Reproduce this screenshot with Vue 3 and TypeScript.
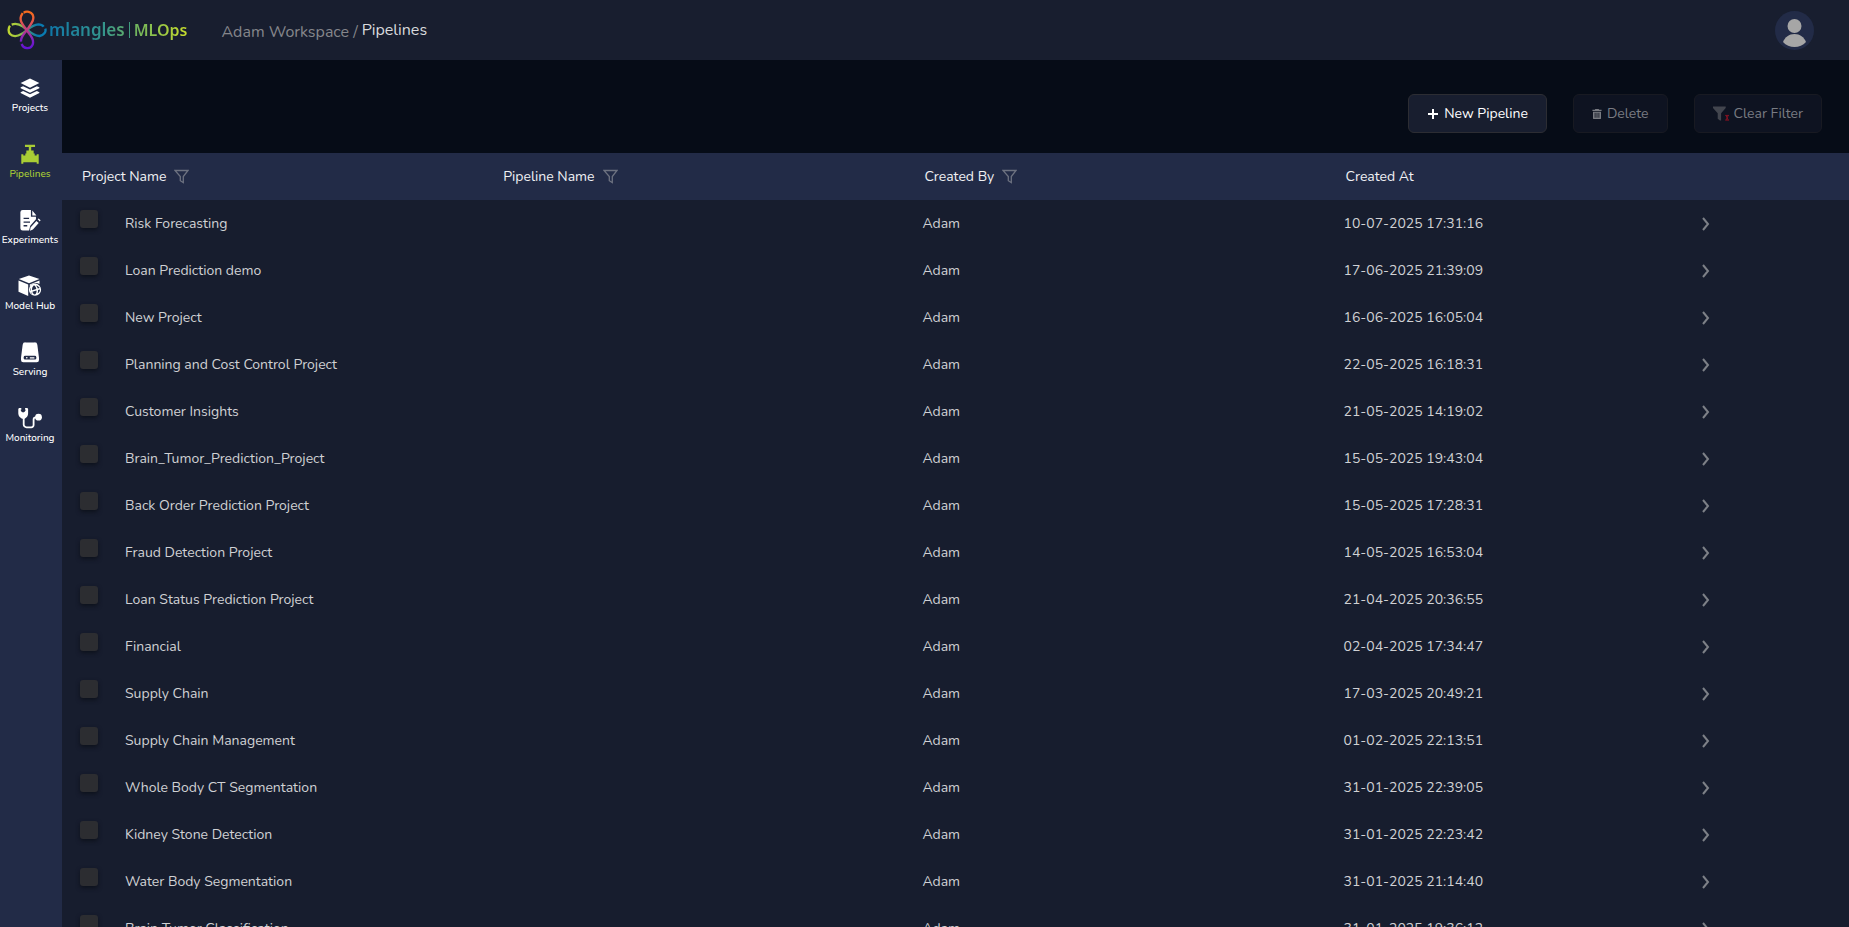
<script setup lang="ts">
import { ref } from 'vue'

interface NavItem {
  id: string
  label: string
}

interface PipelineRow {
  project: string
  pipeline: string
  createdBy: string
  createdAt: string
}

const navItems: NavItem[] = [
  { id: 'projects', label: 'Projects' },
  { id: 'pipelines', label: 'Pipelines' },
  { id: 'experiments', label: 'Experiments' },
  { id: 'hub', label: 'Model Hub' },
  { id: 'serving', label: 'Serving' },
  { id: 'monitoring', label: 'Monitoring' },
]
const activeNav = ref('pipelines')

const columns = [
  { label: 'Project Name', filter: true },
  { label: 'Pipeline Name', filter: true },
  { label: 'Created By', filter: true },
  { label: 'Created At', filter: false },
]

const entries: [string, string][] = [
  ['Risk Forecasting', '10-07-2025 17:31:16'],
  ['Loan Prediction demo', '17-06-2025 21:39:09'],
  ['New Project', '16-06-2025 16:05:04'],
  ['Planning and Cost Control Project', '22-05-2025 16:18:31'],
  ['Customer Insights', '21-05-2025 14:19:02'],
  ['Brain_Tumor_Prediction_Project', '15-05-2025 19:43:04'],
  ['Back Order Prediction Project', '15-05-2025 17:28:31'],
  ['Fraud Detection Project', '14-05-2025 16:53:04'],
  ['Loan Status Prediction Project', '21-04-2025 20:36:55'],
  ['Financial', '02-04-2025 17:34:47'],
  ['Supply Chain', '17-03-2025 20:49:21'],
  ['Supply Chain Management', '01-02-2025 22:13:51'],
  ['Whole Body CT Segmentation', '31-01-2025 22:39:05'],
  ['Kidney Stone Detection', '31-01-2025 22:23:42'],
  ['Water Body Segmentation', '31-01-2025 21:14:40'],
  ['Brain Tumor Classification', '31-01-2025 19:36:12'],
]

const rows: PipelineRow[] = entries.map(([project, createdAt]) => ({
  project,
  pipeline: '',
  createdBy: 'Adam',
  createdAt,
}))

const selected = ref<string[]>([])
</script>

<template>
  <div class="app">
    <header class="topbar">
      <a class="brand" href="#" aria-label="mlangles MLOps">
        <svg class="flower" viewBox="0 0 120 120" aria-hidden="true">
          <defs>
            <linearGradient id="petal-v" x1="0" y1="0" x2="0" y2="120" gradientUnits="userSpaceOnUse">
              <stop offset="0.08" stop-color="#f56a1e" />
              <stop offset="0.3" stop-color="#e2564c" />
              <stop offset="0.52" stop-color="#b8388c" />
              <stop offset="0.75" stop-color="#7d1fc4" />
              <stop offset="1" stop-color="#5d12d8" />
            </linearGradient>
            <linearGradient id="petal-h" x1="0" y1="0" x2="120" y2="0" gradientUnits="userSpaceOnUse">
              <stop offset="0" stop-color="#c3d82e" />
              <stop offset="0.3" stop-color="#9cc545" />
              <stop offset="0.55" stop-color="#3a9080" />
              <stop offset="0.75" stop-color="#0878ac" />
              <stop offset="1" stop-color="#0a7db4" />
            </linearGradient>
          </defs>
          <g fill="none" stroke-width="7">
            <path stroke="url(#petal-h)" d="M9 47C4 53 3 65 9 72C17 81 32 79 42 73C62 62 72 44 94 43C102 43 107 46 110 50M115 56C118 66 110 76 98 78C78 79 66 61 48 50C38 43 24 40 14 44" />
            <path stroke="url(#petal-v)" d="M50 8C59 2 72 5 77 14C84 28 72 42 61 58C50 74 40 82 42 95M44 102C50 118 70 118 76 106C83 92 73 78 60 62C48 45 37 33 42 19L47 9" />
          </g>
        </svg>
        <span class="wordmark"><span class="name">mlangles</span><i class="bar"></i><span>MLOps</span></span>
      </a>
      <nav class="crumbs" aria-label="Breadcrumb">
        <a href="#">Adam Workspace</a>
        <span>/</span>
        <strong>Pipelines</strong>
      </nav>
      <button class="avatar" type="button" aria-label="Account">
        <svg viewBox="0 0 39 39" aria-hidden="true">
          <circle cx="19.500" cy="15" r="7" />
          <path d="M8 31c2-5 6-8 11.500-8S29 26 31 31c-3 3.500-7 5-11.500 5S11 34.500 8 31z" />
        </svg>
      </button>
    </header>

    <div class="body">
      <nav class="sidebar" aria-label="Main">
        <a
          v-for="item in navItems"
          :key="item.id"
          href="#"
          class="nav-item"
          :class="{ active: item.id === activeNav }"
          @click.prevent="activeNav = item.id"
        >
          <svg v-if="item.id === 'projects'" viewBox="0 0 24 24" aria-hidden="true">
            <path d="M12 1.500 1.800 6.600 12 11.600 22.200 6.600z" />
            <path d="m1.800 11.300 2.700-1.300 7.500 3.600 7.500-3.600 2.700 1.300v1L12 17.200l-10.200-4.900z" />
            <path d="m1.800 16.500 2.700-1.300 7.500 3.600 7.500-3.600 2.700 1.300v1L12 22.500 1.800 17.500z" />
          </svg>
          <svg v-else-if="item.id === 'pipelines'" viewBox="0 0 24 24" aria-hidden="true">
            <path d="M6.500 2h11v2.300h-4.200v3.900h2.700v3.300h1.100v2.200h2.200v-1.300h2.200v10.100h-2.200v-1.500H4.700v1.500H2.500v-10.100h2.200v1.300h2.200v-2.200H8V8.200h2.700V4.300H6.500z" />
          </svg>
          <svg v-else-if="item.id === 'experiments'" viewBox="0 0 24 24" aria-hidden="true">
            <path d="M4 1h9v7.500h5.500v2.700l-6.200 7.200-1.300 5.100H4A2.500 2.500 0 0 1 1.500 21V3.500A2.500 2.500 0 0 1 4 1zm1 8.500V11h6V9.500zM5 13.500V15h7v-1.500zM5 17.500V19h4v-1.500z" fill-rule="evenodd" />
            <path d="M14.500 1.500 19 7h-4.500zM19 13l2.500 2.200-6.300 7.200-3.200 1.300.6-3.400zM20.400 11.300l1-.9 2.200 2-1 1.300z" />
          </svg>
          <svg v-else-if="item.id === 'hub'" class="large" viewBox="0 1 24 22" aria-hidden="true">
            <path d="M11 1.500 21.500 5 11 9.200.800 5zM.500 6.500l9.700 4V22L.500 17.700zM11.800 10.500l9.700-4V10a7 7 0 0 0-9.700 3z" />
            <path fill-rule="evenodd" d="M17 9.600a6 6 0 1 1 0 12.200 6 6 0 0 1 0-12.200zm-1 1.700c-1.800 1.500-2 3-1.900 5l4.200-1.200c-.3-1.700-1-3-2.300-3.800zm2 .1c1 1 1.500 2 1.800 3.200l1.800-.6c-.6-1.400-1.800-2.300-3.600-2.600zm-5.400 2.200c-.5 1-.7 2.200-.4 3.200l.6-.2c-.2-1-.2-2-.2-3zm9.300 1.800-1.900.6c.1 1.200 0 2.300-.4 3.300 1.600-.9 2.300-2.200 2.300-3.900zm-3.400 1.100-4.100 1.200c.4 1.400 1.100 2.300 2.600 2.900 1.200-1 1.700-2.400 1.500-4.100zm-5.500 1.700-.4.100c.4.900 1 1.500 1.900 1.900-.7-.6-1.200-1.200-1.500-2z" />
          </svg>
          <svg v-else-if="item.id === 'serving'" viewBox="0 0 24 24" aria-hidden="true">
            <path fill-rule="evenodd" d="M7 1.500h10a3 3 0 0 1 3 2.700l1.800 14v2.500a2.500 2.500 0 0 1-2.500 2.500H4.700a2.500 2.500 0 0 1-2.500-2.500v-2.500L4 4.200a3 3 0 0 1 3-2.700zM6.700 16.200a1.600 1.600 0 0 0-1.600 1.600v.9a1.600 1.600 0 0 0 1.600 1.600h10.600a1.600 1.600 0 0 0 1.600-1.600v-.9a1.600 1.600 0 0 0-1.600-1.600zm1.800 1.200a.9.900 0 1 1 0 1.800.9.900 0 0 1 0-1.800zm3.300.2h5v1.400h-5z" />
          </svg>
          <svg v-else class="large" viewBox="0 1 24 22" aria-hidden="true">
            <path d="M1 2h2.300v1.700h-.8l1 2 1.600.8 1.600-.8 1.200-2h-.8V2h2.300l.7 1v4.500c0 2.500-1.600 4.200-3.400 5.200H4C2.200 11.700.300 10 .300 7.500V3z" />
            <path d="M5.700 11.500v7a2.800 2.800 0 0 0 2.800 2.800h4.800a2.300 2.300 0 0 0 2.300-2.300v-5.500a2.200 2.200 0 0 1 2.200-2.200h2" fill="none" stroke="currentColor" stroke-width="1.800" />
            <circle cx="20.500" cy="11.200" r="3.400" />
          </svg>
          <span>{{ item.label }}</span>
        </a>
      </nav>

      <main class="content">
        <div class="actions">
          <button type="button" class="btn">
            <svg class="plus" viewBox="0 0 12 12" aria-hidden="true"><path d="M6 1v10M1 6h10" /></svg>
            New Pipeline
          </button>
          <button type="button" class="btn" disabled>
            <svg class="trash" viewBox="0 0 12 12" aria-hidden="true">
              <path fill-rule="evenodd" d="M4 0h4l.6 1H11.500v1.500H.500V1h2.900zM1.200 3.200h9.600V11a1 1 0 0 1-1 1H2.200a1 1 0 0 1-1-1zM3.200 4.500v6h1v-6zm2.300 0v6h1v-6zm2.300 0v6h1v-6z" />
            </svg>
            Delete
          </button>
          <button type="button" class="btn" disabled>
            <svg class="clear" viewBox="0 0 17 16" aria-hidden="true">
              <path d="M0 0h13.500v1.500L8.600 7.200V15H7.400L5 13V7.200L0 1.500z" />
              <path class="cross" d="M13 9.500h4M13 14.500h4M13.800 9.500l2.400 5M16.200 9.500l-2.400 5" />
            </svg>
            Clear Filter
          </button>
        </div>

        <div class="table-wrap">
          <table>
            <colgroup>
              <col class="wide" /><col class="wide" /><col class="wide" /><col class="date" /><col />
            </colgroup>
            <thead>
              <tr>
                <th v-for="column in columns" :key="column.label" scope="col">
                  <span class="head">
                    {{ column.label }}
                    <button v-if="column.filter" type="button" class="filter" :aria-label="`Filter by ${column.label}`">
                      <svg viewBox="0 0 15 15" aria-hidden="true"><path d="M1 1.500h13L9.300 7.500v6l-3-1.800V7.500z" /></svg>
                    </button>
                  </span>
                </th>
                <th></th>
              </tr>
            </thead>
            <tbody>
              <tr v-for="row in rows" :key="row.project">
                <td>
                  <label class="pick">
                    <input v-model="selected" type="checkbox" :value="row.project" />
                    <span>{{ row.project }}</span>
                  </label>
                </td>
                <td>{{ row.pipeline }}</td>
                <td>{{ row.createdBy }}</td>
                <td>{{ row.createdAt }}</td>
                <td class="open">
                  <button type="button" :aria-label="`Open ${row.project}`">
                    <svg viewBox="0 0 8 14" aria-hidden="true"><path d="m1 1 5 6-5 6" /></svg>
                  </button>
                </td>
              </tr>
            </tbody>
          </table>
        </div>
      </main>
    </div>
  </div>
</template>

<style>
body {
  margin: 0;
  background: #060c17;
}
</style>

<style scoped>
.app {
  display: flex;
  flex-direction: column;
  height: 100vh;
  overflow: hidden;
  color: #d0d1d4;
  font-family: Nunito, "Open Sans", "Noto Sans", sans-serif;
  font-size: 14px;
  line-height: 20px;
}
a {
  color: inherit;
  text-decoration: none;
}
button {
  padding: 0;
  border: 0;
  background: none;
  color: inherit;
  font: inherit;
}
svg {
  display: block;
}
.topbar {
  display: flex;
  align-items: center;
  flex: none;
  height: 60px;
  padding: 0 35px 0 7px;
  background: #181e2f;
}
.brand {
  display: flex;
  align-items: center;
  gap: 2px;
}
.flower {
  width: 40px;
  height: 40px;
}
.wordmark {
  display: flex;
  align-items: center;
  background: linear-gradient(90deg, #0f77a8, #35968c 40%, #6db35f 62%, #c6dc2c);
  background-clip: text;
  -webkit-background-clip: text;
  color: transparent;
  font-family: "Noto Sans", sans-serif;
  font-size: 16px;
  font-weight: 600;
  line-height: 24px;
}
.wordmark .name {
  font-size: 17px;
}
.bar {
  width: 1px;
  height: 16px;
  margin: 0 4px;
  background: #409a80;
}
.crumbs {
  display: flex;
  align-items: flex-start;
  gap: 4px;
  margin-left: 34px;
  padding-top: 2px;
  color: #85868b;
  font-size: 16px;
}
.crumbs a,
.crumbs span {
  padding-top: 2px;
}
.crumbs strong {
  color: #d9dadd;
  font-weight: 400;
}
.avatar {
  width: 39px;
  height: 39px;
  margin-left: auto;
  border-radius: 50%;
  background: #222b47;
  fill: #a6a6a6;
}
.body {
  display: flex;
  flex: 1;
  min-height: 0;
}
.sidebar {
  display: flex;
  flex-direction: column;
  flex: none;
  gap: 29px;
  width: 62px;
  padding-top: 17px;
  background: #222b47;
}
.nav-item {
  display: flex;
  flex-direction: column;
  align-items: center;
  gap: 3px;
  margin-right: 2px;
  color: #fff;
  font-size: 10px;
  font-weight: 500;
  line-height: 12px;
  white-space: nowrap;
}
.nav-item svg {
  width: 22px;
  height: 22px;
  fill: currentColor;
}
.nav-item .large {
  width: 24px;
}
.nav-item.active {
  color: #a9cd35;
}
.content {
  display: flex;
  flex: 1;
  flex-direction: column;
  min-width: 0;
  background: #060c17;
}
.actions {
  display: flex;
  flex: none;
  justify-content: flex-end;
  gap: 26px;
  padding: 34px 27px 20px;
}
.btn {
  display: flex;
  align-items: center;
  gap: 5px;
  height: 39px;
  padding: 0 18px;
  border: 1px solid #2c2d33;
  border-radius: 6px;
  background: #181e2f;
  color: #fff;
}
.btn:disabled {
  border-color: #181a22;
  background: #0e1321;
  color: #797b82;
}
.plus {
  width: 12px;
  height: 12px;
  fill: none;
  stroke: currentColor;
  stroke-width: 2;
}
.trash {
  width: 10px;
  height: 12px;
  fill: currentColor;
}
.clear {
  width: 16px;
  height: 16px;
  fill: #42454e;
}
.clear .cross {
  fill: none;
  stroke: #8a1222;
}
.table-wrap {
  flex: 1;
  min-height: 0;
  overflow: hidden;
  background: #171d2e;
}
table {
  width: 100%;
  border-collapse: collapse;
  table-layout: fixed;
}
.wide {
  width: 23.57%;
}
.date {
  width: 20.4%;
}
th {
  height: 47px;
  padding: 0 20px;
  background: #222b47;
  color: #f0f1f4;
  font-weight: 400;
  text-align: left;
}
.head {
  display: flex;
  align-items: center;
  gap: 8px;
}
.filter svg {
  width: 15px;
  height: 15px;
  fill: none;
  stroke: #6d7280;
  stroke-width: 1.3;
}
td {
  height: 47px;
  padding: 0 18px;
}
.pick {
  display: flex;
  gap: 27px;
}
.pick input {
  appearance: none;
  width: 18px;
  height: 18px;
  margin: 0 0 9px;
  border-radius: 3px;
  background: #2c2d31;
  box-shadow: 0 2px 4px #0d111b;
}
.pick input:checked {
  background: #a9cd35;
}
.pick span {
  padding-top: 4px;
}
.open {
  padding: 0 12px;
}
.open button {
  display: block;
}
.open svg {
  width: 8px;
  height: 14px;
  fill: none;
  stroke: #7d8087;
  stroke-width: 2;
}
</style>
